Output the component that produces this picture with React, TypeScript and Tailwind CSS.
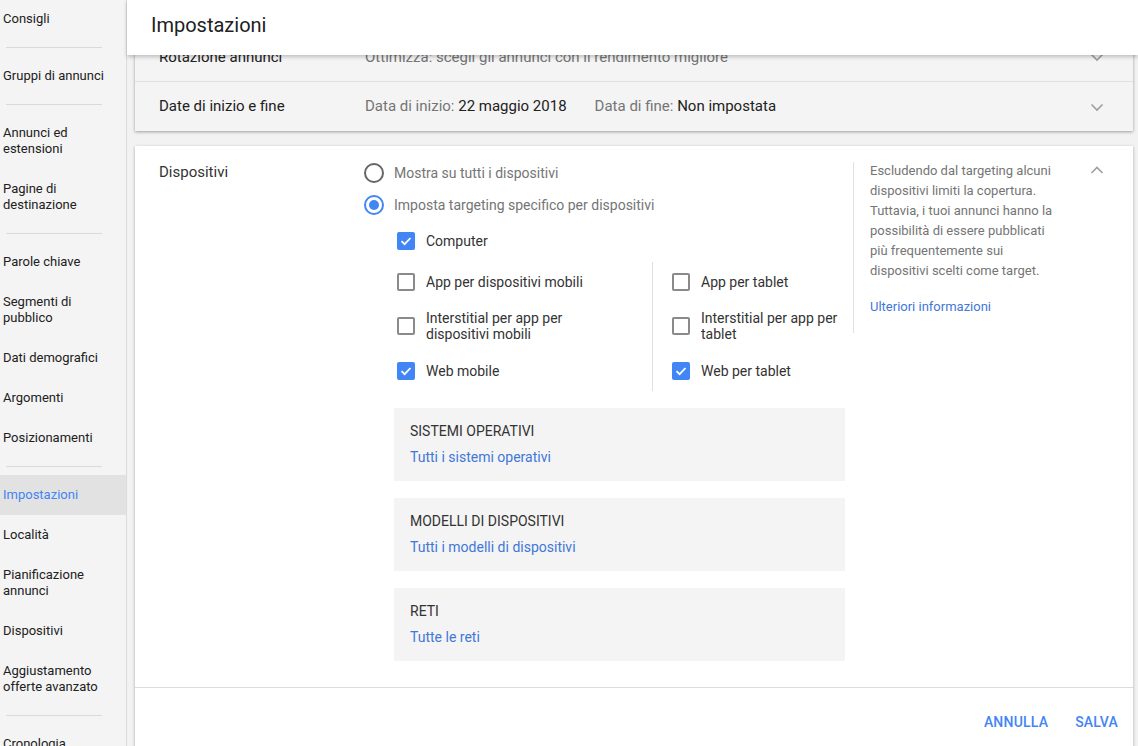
import React from "react";

type NavItem = { label: string[]; active?: boolean } | "sep";

const nav: NavItem[] = [
  { label: ["Consigli"] },
  "sep",
  { label: ["Gruppi di annunci"] },
  "sep",
  { label: ["Annunci ed", "estensioni"] },
  { label: ["Pagine di", "destinazione"] },
  "sep",
  { label: ["Parole chiave"] },
  { label: ["Segmenti di", "pubblico"] },
  { label: ["Dati demografici"] },
  { label: ["Argomenti"] },
  { label: ["Posizionamenti"] },
  "sep",
  { label: ["Impostazioni"], active: true },
  { label: ["Località"] },
  { label: ["Pianificazione", "annunci"] },
  { label: ["Dispositivi"] },
  { label: ["Aggiustamento", "offerte avanzato"] },
  "sep",
  { label: ["Cronologia"] },
];

function Chevron({ up }: { up?: boolean }) {
  return (
    <svg width="24" height="24" viewBox="0 0 24 24" className="shrink-0">
      <path
        d={up ? "M6.5 15 L12 9.5 L17.5 15" : "M6.5 9.5 L12 15 L17.5 9.5"}
        fill="none"
        stroke="#9e9e9e"
        strokeWidth="1.6"
      />
    </svg>
  );
}

function Checkbox({ checked }: { checked?: boolean }) {
  if (checked) {
    return (
      <span className="w-[18px] h-[18px] rounded-[2px] bg-[#4285f4] flex items-center justify-center shrink-0">
        <svg width="14" height="14" viewBox="0 0 14 14">
          <path d="M2.5 7.2 L5.6 10.2 L11.5 4" fill="none" stroke="#fff" strokeWidth="1.8" />
        </svg>
      </span>
    );
  }
  return <span className="w-[18px] h-[18px] rounded-[2px] border-2 border-[#8a8a8a] shrink-0" />;
}

function Radio({ checked }: { checked?: boolean }) {
  return checked ? (
    <span className="w-5 h-5 rounded-full border-2 border-[#4285f4] flex items-center justify-center shrink-0">
      <span className="w-[10px] h-[10px] rounded-full bg-[#4285f4]" />
    </span>
  ) : (
    <span className="w-5 h-5 rounded-full border-2 border-[#666] shrink-0" />
  );
}

function CheckRow({ checked, lines, h }: { checked?: boolean; lines: string[]; h: string }) {
  return (
    <div className={`flex items-center gap-[11px] ${h}`}>
      <Checkbox checked={checked} />
      <div className="text-[14px] leading-[16px] text-[#333]">
        {lines.map((l) => (
          <div key={l}>{l}</div>
        ))}
      </div>
    </div>
  );
}

function GrayBox({ title, link }: { title: string; link: string }) {
  return (
    <div className="bg-[#f4f4f4] w-[451px] h-[73px] pl-4 pt-[13px]">
      <div className="text-[14px] leading-5 text-[#333]">{title}</div>
      <div className="text-[14px] leading-5 text-[#4177d9] mt-[6px]">{link}</div>
    </div>
  );
}

export default function App() {
  return (
    <div className="flex w-[1138px] h-[746px] overflow-hidden font-['Roboto',sans-serif] bg-[#f2f2f2]">
      {/* sidebar */}
      <aside className="w-[127px] shrink-0 bg-[#f4f4f4] border-r border-[#dcdcdc] mt-[-1px]">
        {nav.map((item, i) =>
          item === "sep" ? (
            <div key={i} className="my-2 ml-[6px] w-[96px] h-px bg-[#dadada]" />
          ) : (
            <div
              key={i}
              className={`py-3 pl-[3px] text-[13px] leading-4 ${
                item.active ? "bg-[#e2e2e2] text-[#4285f4]" : "text-[#212121]"
              }`}
            >
              {item.label.map((l) => (
                <div key={l}>{l}</div>
              ))}
            </div>
          )
        )}
      </aside>

      {/* main */}
      <main className="relative flex-1 min-w-0">
        <header className="absolute top-0 left-0 right-0 h-[55px] bg-white z-10 shadow-[0_2px_4px_rgba(0,0,0,0.22)] flex items-center pl-6">
          <h1 className="text-[20px] text-[#212121] mt-[-6px]">Impostazioni</h1>
        </header>

        <div className="pt-[33px] pl-2 pr-[5px]">
          {/* collapsed rows card */}
          <div className="bg-[#f4f4f4] shadow-[0_1px_3px_rgba(0,0,0,0.35)]">
            <div className="h-[49px] flex items-center pl-6 pr-[24px] border-b border-[#e0e0e0] text-[15px]">
              <div className="w-[206px] text-[#212121]">Rotazione annunci</div>
              <div className="flex-1 text-[#757575]">Ottimizza: scegli gli annunci con il rendimento migliore</div>
              <Chevron />
            </div>
            <div className="h-[49px] flex items-center pl-6 pr-[24px] text-[15px]">
              <div className="w-[206px] text-[#212121]">Date di inizio e fine</div>
              <div className="flex-1 flex gap-[28px]">
                <span>
                  <span className="text-[#757575]">Data di inizio: </span>
                  <span className="text-[#212121]">22 maggio 2018</span>
                </span>
                <span>
                  <span className="text-[#757575]">Data di fine: </span>
                  <span className="text-[#212121]">Non impostata</span>
                </span>
              </div>
              <Chevron />
            </div>
          </div>

          {/* expanded card */}
          <div className="mt-[15px] bg-white shadow-[0_1px_3px_rgba(0,0,0,0.3)] h-[620px]">
            <div className="flex pt-4 pr-6">
              <div className="w-[230px] pl-6 text-[15px] leading-5 text-[#333]">Dispositivi</div>

              <div className="w-[488px] shrink-0">
                <div className="flex items-center gap-[10px] h-5 ml-[-1px] mt-[1px]">
                  <Radio />
                  <span className="text-[14px] text-[#757575]">Mostra su tutti i dispositivi</span>
                </div>
                <div className="flex items-center gap-[10px] h-5 ml-[-1px] mt-3">
                  <Radio checked />
                  <span className="text-[14px] text-[#757575]">Imposta targeting specifico per dispositivi</span>
                </div>

                <div className="ml-8 mt-[16px] h-[20px] flex items-center">
                  <CheckRow checked lines={["Computer"]} h="h-5" />
                </div>

                <div className="ml-8 mt-[11px] flex">
                  <div className="w-[256px] border-r border-[#e0e0e0]">
                    <CheckRow lines={["App per dispositivi mobili"]} h="h-[40px]" />
                    <CheckRow lines={["Interstitial per app per", "dispositivi mobili"]} h="h-[48px]" />
                    <CheckRow checked lines={["Web mobile"]} h="h-[41px]" />
                  </div>
                  <div className="pl-[19px]">
                    <CheckRow lines={["App per tablet"]} h="h-[40px]" />
                    <CheckRow lines={["Interstitial per app per", "tablet"]} h="h-[48px]" />
                    <CheckRow checked lines={["Web per tablet"]} h="h-[41px]" />
                  </div>
                </div>

                <div className="ml-[29px] mt-[17px] flex flex-col gap-[17px]">
                  <GrayBox title="SISTEMI OPERATIVI" link="Tutti i sistemi operativi" />
                  <GrayBox title="MODELLI DI DISPOSITIVI" link="Tutti i modelli di dispositivi" />
                  <GrayBox title="RETI" link="Tutte le reti" />
                </div>
              </div>

              <div className="border-l border-[#e0e0e0] h-[171px] pl-4 w-[212px] shrink-0">
                <p className="w-[190px] text-[13px] leading-5 text-[#757575] mt-[-1px]">
                  Escludendo dal targeting alcuni dispositivi limiti la copertura. Tuttavia, i tuoi annunci hanno la
                  possibilità di essere pubblicati più frequentemente sui dispositivi scelti come target.
                </p>
                <div className="mt-4 text-[13px] leading-5 text-[#4177d9]">Ulteriori informazioni</div>
              </div>

              <div className="flex-1 flex justify-end mt-[-4px]">
                <Chevron up />
              </div>
            </div>

            <div className="mt-[26px] border-t border-[#dcdcdc] flex justify-end items-center gap-[27px] pr-[15px] h-[70px]">
              <button className="text-[14px] font-medium text-[#4285f4] tracking-[0.2px]">ANNULLA</button>
              <button className="text-[14px] font-medium text-[#4285f4] tracking-[0.2px]">SALVA</button>
            </div>
          </div>
        </div>
      </main>
    </div>
  );
}
